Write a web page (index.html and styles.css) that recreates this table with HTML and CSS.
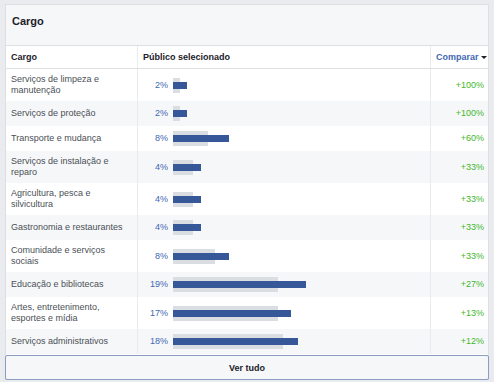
FILE: index.html
```html
<!DOCTYPE html>
<html lang="pt-BR">
<head>
<meta charset="utf-8">
<link rel="stylesheet" href="styles.css">
</head>
<body>
<div class="card">
  <div class="card-head">Cargo</div>
  <div class="tbl">
    <div class="row head">
      <div class="c1">Cargo</div>
      <div class="c2">Público selecionado</div>
      <div class="c3"><span class="cmp">Comparar</span><span class="caret"></span></div>
    </div>
    <div class="row">
      <div class="c1">Serviços de limpeza e manutenção</div>
      <div class="c2"><span class="pct">2%</span><span class="bar"><span class="base" style="width:7px"></span><span class="val" style="width:14px"></span></span></div>
      <div class="c3 up">+100%</div>
    </div>
    <div class="row alt">
      <div class="c1">Serviços de proteção</div>
      <div class="c2"><span class="pct">2%</span><span class="bar"><span class="base" style="width:7px"></span><span class="val" style="width:14px"></span></span></div>
      <div class="c3 up">+100%</div>
    </div>
    <div class="row">
      <div class="c1">Transporte e mudança</div>
      <div class="c2"><span class="pct">8%</span><span class="bar"><span class="base" style="width:35px"></span><span class="val" style="width:56px"></span></span></div>
      <div class="c3 up">+60%</div>
    </div>
    <div class="row alt">
      <div class="c1">Serviços de instalação e reparo</div>
      <div class="c2"><span class="pct">4%</span><span class="bar"><span class="base" style="width:20px"></span><span class="val" style="width:28px"></span></span></div>
      <div class="c3 up">+33%</div>
    </div>
    <div class="row">
      <div class="c1">Agricultura, pesca e silvicultura</div>
      <div class="c2"><span class="pct">4%</span><span class="bar"><span class="base" style="width:20px"></span><span class="val" style="width:28px"></span></span></div>
      <div class="c3 up">+33%</div>
    </div>
    <div class="row alt">
      <div class="c1">Gastronomia e restaurantes</div>
      <div class="c2"><span class="pct">4%</span><span class="bar"><span class="base" style="width:20px"></span><span class="val" style="width:28px"></span></span></div>
      <div class="c3 up">+33%</div>
    </div>
    <div class="row">
      <div class="c1">Comunidade e serviços sociais</div>
      <div class="c2"><span class="pct">8%</span><span class="bar"><span class="base" style="width:42px"></span><span class="val" style="width:56px"></span></span></div>
      <div class="c3 up">+33%</div>
    </div>
    <div class="row alt">
      <div class="c1">Educação e bibliotecas</div>
      <div class="c2"><span class="pct">19%</span><span class="bar"><span class="base" style="width:105px"></span><span class="val" style="width:133px"></span></span></div>
      <div class="c3 up">+27%</div>
    </div>
    <div class="row">
      <div class="c1">Artes, entretenimento, esportes e mídia</div>
      <div class="c2"><span class="pct">17%</span><span class="bar"><span class="base" style="width:105px"></span><span class="val" style="width:118px"></span></span></div>
      <div class="c3 up">+13%</div>
    </div>
    <div class="row alt">
      <div class="c1">Serviços administrativos</div>
      <div class="c2"><span class="pct">18%</span><span class="bar"><span class="base" style="width:110px"></span><span class="val" style="width:125px"></span></span></div>
      <div class="c3 up">+12%</div>
    </div>
  </div>
  <button class="more" type="button">Ver tudo</button>
</div>
</body>
</html>
```
FILE: styles.css
```css
html, body {
  margin: 0;
  padding: 0;
  background: #e9ebee;
}
body {
  padding: 4px 5px 0 5px;
  font-family: "Liberation Sans", Arial, sans-serif;
  color: #4b4f56;
  font-size: 9px;
}
.card {
  width: 484px;
  box-sizing: border-box;
  background: #fff;
  border: 1px solid #dddfe2;
  border-bottom: none;
}
.card-head {
  background: #f6f7f9;
  height: 41px;
  padding: 10px 0 0 6px;
  box-sizing: border-box;
  font-weight: bold;
  font-size: 11px;
  color: #1d2129;
  border-bottom: 1px solid #dddfe2;
}
.row {
  display: grid;
  grid-template-columns: 131px 293px 1fr;
  background: #fff;
}
.row.alt {
  background: #f6f7f9;
}
.row > div {
  padding: 5px 5px;
  line-height: 11px;
  display: flex;
  align-items: center;
}
.row .c1 {
  padding-left: 5px;
  padding-right: 14px;
}
.row .c2 {
  border-left: 1px solid #e9ebee;
  padding-left: 0;
  gap: 5px;
}
.row .c3 {
  border-left: 1px solid #e9ebee;
  justify-content: flex-end;
  padding-right: 4px;
}
.row.head {
  background: #fff;
  border-bottom: 1px solid #dddfe2;
  font-weight: bold;
  color: #1d2129;
}
.row.head > div {
  height: 22px;
  box-sizing: border-box;
}
.row.head .c2 {
  padding-left: 5px;
}
.cmp {
  color: #4267b2;
}
.caret {
  width: 0;
  height: 0;
  border-left: 3px solid transparent;
  border-right: 3px solid transparent;
  border-top: 3px solid #1d2129;
  margin-left: 2px;
}
.pct {
  width: 30px;
  text-align: right;
  color: #4267b2;
  flex: none;
}
.bar {
  display: grid;
  align-items: center;
}
.bar > span {
  grid-area: 1 / 1;
  display: block;
}
.base {
  height: 15px;
  background: #dadde1;
}
.val {
  height: 7px;
  background: #365899;
}
.up {
  color: #42b72a;
}
.more {
  display: block;
  width: 484px;
  margin: 1px 0 0 -1px;
  height: 25px;
  border: 1px solid #8b9dc3;
  border-radius: 2px;
  background: #f6f7f9;
  font-family: "Liberation Sans", Arial, sans-serif;
  font-weight: bold;
  font-size: 9px;
  color: #1d2129;
  box-shadow: 0 1px 1px rgba(0,0,0,0.1);
}
```
